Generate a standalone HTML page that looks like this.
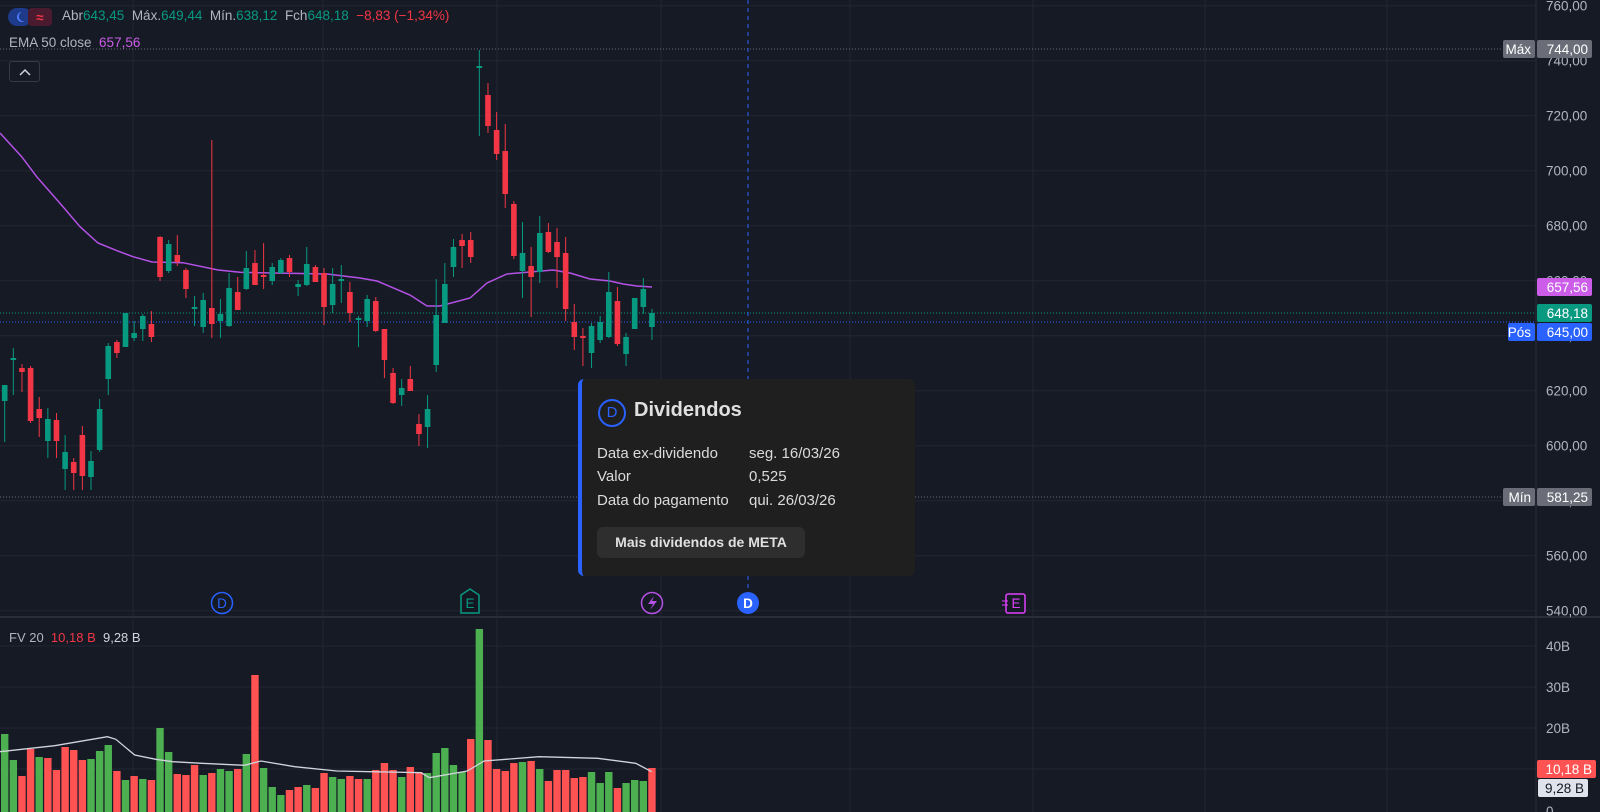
<!DOCTYPE html>
<html><head><meta charset="utf-8">
<style>
html,body{margin:0;padding:0;background:#161a25;width:1600px;height:812px;overflow:hidden;font-family:"Liberation Sans",sans-serif}
#w{position:relative;width:1600px;height:812px}
svg{position:absolute;left:0;top:0}
.lg{position:absolute;font-size:13px;color:#b2b5be;white-space:nowrap}
.g{color:#089981}.r{color:#f23645}
.tip{position:absolute;left:578px;top:379px;width:337px;height:197px;background:#1f1f1f;border-radius:6px;border-left:4px solid #2962ff;box-sizing:border-box;color:#dbdbdb}
.tip .row{position:absolute;left:15px;font-size:15px;white-space:nowrap;width:300px}
.tip .v{position:absolute;left:152px;white-space:nowrap}
</style></head><body><div id="w">
<svg id="s" width="1600" height="812" xmlns="http://www.w3.org/2000/svg"></svg>

<div class="lg" style="left:62px;top:8px;font-size:13.5px">Abr<span class="g">643,45</span>&nbsp; Máx.<span class="g">649,44</span>&nbsp; Mín.<span class="g">638,12</span>&nbsp; Fch<span class="g">648,18</span>&nbsp; <span class="r">−8,83 (−1,34%)</span></div>
<div class="lg" style="left:9px;top:35px;font-size:13.5px">EMA 50 close&nbsp; <span style="color:#cc5de8">657,56</span></div>
<div style="position:absolute;left:9px;top:61px;width:31px;height:21px;border:1px solid #363a45;border-radius:3px;box-sizing:border-box"></div>
<div class="lg" style="left:9px;top:630px;font-size:13px">FV 20&nbsp; <span style="color:#f23645">10,18 B</span>&nbsp; <span style="color:#d1d4dc">9,28 B</span></div>

<div class="tip">
<div style="position:absolute;left:16px;top:20px;width:24px;height:24px;border:2px solid #2962ff;border-radius:50%;color:#2962ff;font-size:15px;text-align:center;line-height:24px">D</div>
<div style="position:absolute;left:52px;top:20px;font-size:20px;font-weight:bold;color:#e0e0e0">Dividendos</div>
<div class="row" style="top:66px">Data ex-dividendo<span class="v">seg. 16/03/26</span></div>
<div class="row" style="top:89px">Valor<span class="v">0,525</span></div>
<div class="row" style="top:113px">Data do pagamento<span class="v">qui. 26/03/26</span></div>
<div style="position:absolute;left:15px;top:148px;width:208px;height:31px;background:#2e2e2e;border-radius:6px;font-size:14px;font-weight:bold;color:#e0e0e0;text-align:center;line-height:31px">Mais dividendos de META</div>
</div>
</div>
<script>
var s=document.getElementById('s'),h='';
function R(x,y,w,hh,c,extra){h+='<rect x="'+x+'" y="'+y+'" width="'+w+'" height="'+hh+'" fill="'+c+'" '+(extra||'')+'/>';}
function L(x1,y1,x2,y2,c,extra){h+='<line x1="'+x1+'" y1="'+y1+'" x2="'+x2+'" y2="'+y2+'" stroke="'+c+'" '+(extra||'')+'/>';}
function T(x,y,t,c,extra){h+='<text x="'+x+'" y="'+y+'" fill="'+c+'" font-family="Liberation Sans" font-size="13.5" '+(extra||'')+'>'+t+'</text>';}
var grid='#232632';
[133,323,497,661,850,1033,1205,1387].forEach(function(x){L(x,0,x,812,grid,'stroke-width="1"');});
var prices=['760,00','740,00','720,00','700,00','680,00','660,00','640,00','620,00','600,00','580,00','560,00','540,00'];
for(var k=0;k<12;k++){var y=5.7+k*55;L(0,y,1536,y,grid);}
L(0,617,1600,617,'#2a2e39','stroke-width="2"');
[646,687,728,769].forEach(function(y){L(0,y,1536,y,grid);});
L(1536,0,1536,812,'#2a2e39');
h+='<polyline fill="none" stroke="#b452e6" stroke-width="1.5" points="0,133 21.7,156.7 36.7,176.7 63,206.7 80,226.7 98,243 117,250.7 133,256.7 152,262 183,262.7 218,270 240,272.3 327,274 360,278 377,281 410,295 427,306 440,306 470,298 487,283 507,274 530,272 553,270 570,273 590,279 610,281 623,284 637,286 652,287"/>';
L(0,49,1536,49,'#6a6d78','stroke-dasharray="1,2"');
L(0,497,1536,497,'#6a6d78','stroke-dasharray="1,2"');
L(0,313,1536,313,'#089981','stroke-dasharray="1,2"');
L(0,322,1536,322,'#2962ff','stroke-dasharray="1,2"');
L(748,0,748,592,'#2962ff','stroke-dasharray="4,4"');
var C=[[385,401,385,442,1],[358,360,348,395,1],[368,372,364,392,0],[368,421,366,423,0],[409,418,397,437,0],[419,441,408,458,1],[420,441,413,458,0],[452,469,435,490,1],[462,473,458,490,0],[435,476,426,490,0],[461,477,451,490,1],[409,450,399,452,1],[346,379,343,395,1],[342,353,340,358,0],[313,347,313,347,1],[333,338,321,341,1],[316,329,314,341,1],[324,337,311,342,0],[237,277,236,281,0],[244,271,240,273,1],[255,262,235,266,0],[270,289,268,298,0],[307,309,296,326,1],[300,327,293,333,1],[308,324,140,338,0],[314,321,299,338,1],[288,326,273,327,1],[292,310,277,310,0],[268,289,251,290,1],[263,285,250,285,0],[275,277,243,289,0],[267,281,263,285,1],[260,273,258,274,1],[258,272,255,277,0],[284,287,280,296,1],[264,285,247,286,1],[267,282,265,282,0],[273,307,268,325,0],
[284,305,268,313,1],[279,281,265,303,1],[292,313,282,322,0],[318,320,316,347,1],[299,321,295,327,1],[301,331,297,332,0],[329,360,329,378,0],[373,403,368,404,0],[388,395,379,406,1],[379,391,366,391,0],[424,434,414,446,0],[409,427,395,448,1],[315,365,279,372,1],[284,323,263,323,1],[247,267,239,277,1],[240,246,234,268,0],[240,257,232,263,0],[66,68,50,136,1],[95,126,83,133,0],[130,154,112,160,0],[151,194,124,208,0],[204,256,201,259,0],[253,271,222,298,1],[266,277,247,317,0],[233,272,216,283,1],[232,252,223,253,0],[242,257,228,288,0],[253,309,237,321,0],[322,337,304,350,0],[336,338,328,366,0],[326,353,323,368,1],[322,340,316,343,1],[292,337,272,338,1],[301,344,287,346,0],[337,354,333,366,1],[298,329,298,329,1],[289,307,278,314,1],[313,327,309,340,1]];
C.forEach(function(c,i){var x=4.7+8.63*i,col=c[4]?'#089981':'#f23645';L(x,c[2],x,c[3],col,'stroke-width="1"');R(x-2.8,c[0],5.6,Math.max(1.5,c[1]-c[0]),col);});
var V=[[734,1],[760,1],[776,0],[749,0],[757,1],[758,0],[770,0],[747,0],[750,0],[760,0],[759,1],[751,1],[745,1],[771,0],[780,1],[776,0],[779,1],[780,0],[728,1],[752,1],[774,0],[775,0],[765,0],[775,1],[773,0],[769,1],[771,1],[769,0],[754,1],[675,0],[768,1],[787,1],[795,1],[790,0],[787,0],[785,1],[788,0],[773,0],[777,1],[779,1],[776,0],[779,0],[779,1],[770,0],[763,0],[770,0],[777,1],[767,0],[772,0],[773,1],[753,1],[748,1],[765,1],[772,1],[739,0],[629,1],[740,0],[769,0],[771,0],[763,0],[762,1],[761,0],[769,1],[781,0],[770,0],[770,0],[778,0],[777,0],[772,1],[783,1],[772,1],[788,0],[783,1],[780,1],[781,1],[768,0]];
V.forEach(function(v,i){var x=4.7+8.63*i;R(x-3.7,v[0],7.4,812-v[0],v[1]?'#4caf50':'#ff5252');});
var vm=[[0,455],[130,437],[255,410],[275,418],[320,465],[370,478],[410,485],[480,490],[580,496],[620,483],[700,500],[800,513],[1000,518],[1020,533],[1110,513],[1150,483],[1280,470],[1420,475],[1510,490],[1548,515]].map(function(p){return (p[0]*0.421).toFixed(1)+','+(600+p[1]/3).toFixed(1)}).join(' ');
h+='<polyline fill="none" stroke="#d1d4dc" stroke-width="1.3" points="'+vm+'"/>';
for(k=0;k<12;k++){T(1546,5.7+k*55+5,prices[k],'#b2b5be');}
T(1546,651,'40B','#b2b5be');T(1546,692,'30B','#b2b5be');T(1546,733,'20B','#b2b5be');T(1546,816,'0','#b2b5be');
function LB(x,y,w,bg,t,tc){R(x,y,w,18,bg,'rx="2"');T(x+w-4,y+14,t,tc,'text-anchor="end"');}
LB(1503,40,32,'#6a6d78','Máx','#fff');LB(1537,40,55,'#6a6d78','744,00','#fff');
LB(1537,278,55,'#cc5de8','657,56','#fff');
LB(1537,304,55,'#089981','648,18','#fff');
LB(1508,323,27,'#2962ff','Pós','#fff');LB(1537,323,55,'#2962ff','645,00','#fff');
LB(1503,488,32,'#6a6d78','Mín','#fff');LB(1537,488,55,'#6a6d78','581,25','#fff');
LB(1537,760,59,'#ff5252','10,18 B','#fff');
R(1538,779,50,18,'#e0e3eb','rx="2"');T(1584,793,'9,28 B','#131722','text-anchor="end"');
h+='<circle cx="222" cy="603" r="10.5" fill="#161a25" stroke="#2962ff" stroke-width="1.5"/>';T(222,608,'D','#2962ff','text-anchor="middle" font-size="12"');
h+='<path d="M461,595 L470,589 L479,595 L479,613 L461,613 Z" fill="#131722" stroke="#089981" stroke-width="1.5"/>';T(470,608,'E','#089981','text-anchor="middle" font-size="12"');
h+='<circle cx="652" cy="603" r="10.5" fill="#161a25" stroke="#b452e6" stroke-width="1.5"/><path d="M654,596 L648,604 L653,604 L650,610 L657,601 L652,601 Z" fill="#b452e6"/>';
h+='<circle cx="748" cy="603" r="11" fill="#2962ff"/>';T(748,608,'D','#fff','text-anchor="middle" font-size="12" font-weight="bold"');
h+='<rect x="1006" y="594" width="19" height="19" rx="2" fill="#161a25" stroke="#e040fb" stroke-width="1.5"/>';T(1016,608,'E','#e040fb','text-anchor="middle" font-size="12"');
L(1002,601,1008,601,'#e040fb');L(1002,605,1008,605,'#e040fb');
R(8,8,24,18,'#1e3a8a','rx="9"');R(28,8,24,18,'#4a1a2e','rx="4"');
h+='<path d="M22,12 a5,5 0 1 0 3,9 a4,4 0 1 1 -3,-9z" fill="#4d7cff"/>';
T(40,22,'≈','#f23645','text-anchor="middle" font-size="15" font-weight="bold"');
h+='<path d="M20,75 L25,70 L30,75" fill="none" stroke="#d1d4dc" stroke-width="1.5"/>';
s.innerHTML=h;
</script>
</body></html>
